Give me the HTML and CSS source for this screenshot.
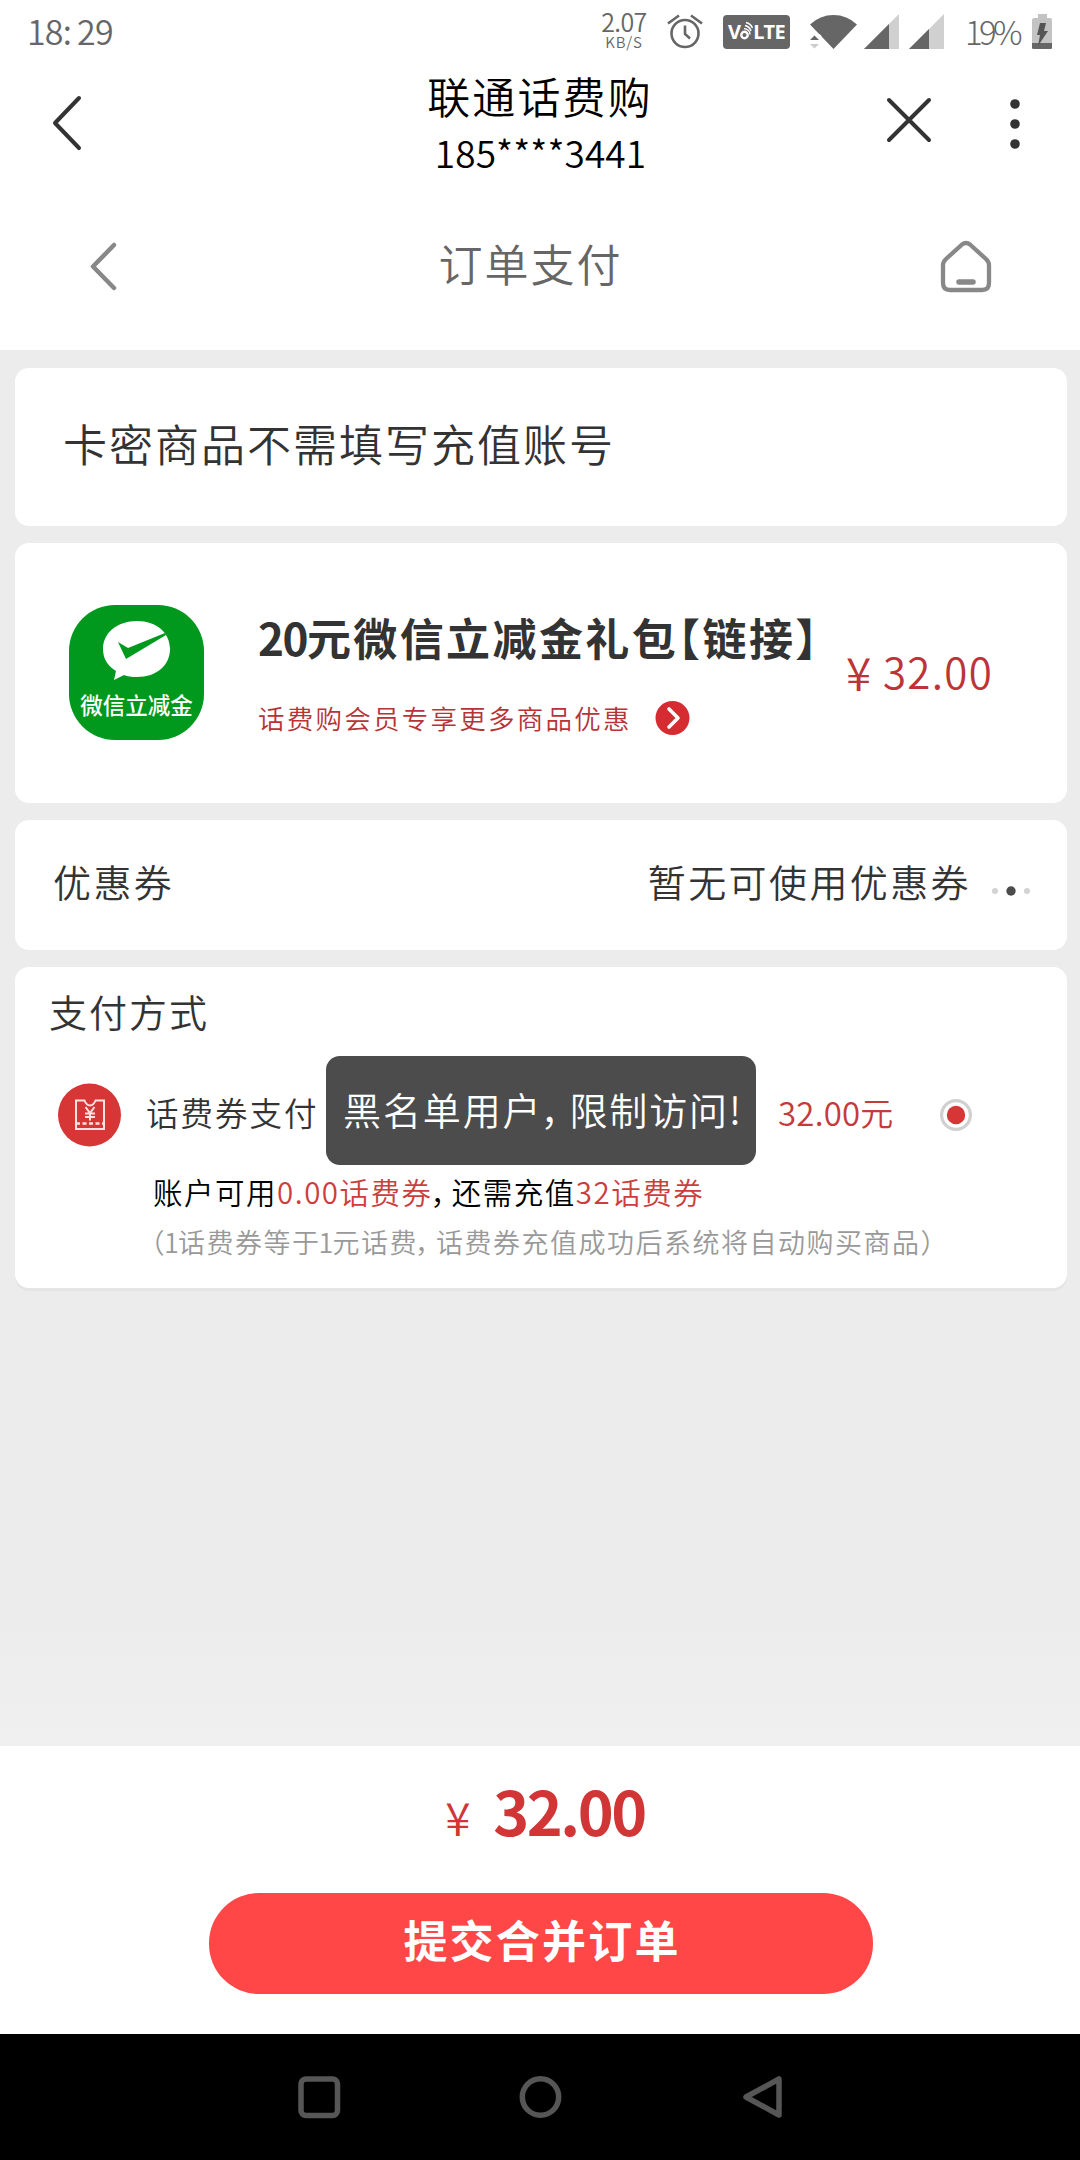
FILE: index.html
```html
<!DOCTYPE html>
<html lang="zh-CN">
<head>
<meta charset="utf-8">
<title>订单支付</title>
<link rel="stylesheet" href="styles.css">
</head>
<body>
<div class="screen">
  <header class="top">
    <div class="status">
      <span class="clock">18:<span class="minutes">29</span></span>
      <div class="speed"><span class="rate">2.07</span><span class="unit">KB/S</span></div>
      <svg class="alarm" width="36" height="36" viewBox="0 0 36 36" fill="none" stroke="#666" stroke-width="2.6">
        <circle cx="18" cy="19.5" r="13.5"/><path d="M18 11.5v8.5l5 4.5M1 9.500L12 1.500M35 9.500L24 1.500"/>
      </svg>
      <div class="volte">
        <span>V</span>
        <svg width="13" height="20" viewBox="0 0 13 20" fill="none" stroke="#fff"><circle cx="4.500" cy="14" r="3.200" stroke-width="2.400"/><path d="M4 7.500a6.500 6.500 0 0 1 6 6M5 4.500a8 8 0 0 1 6 5.500M6 1.500a9 9 0 0 1 6.500 5.500" stroke-width="1.500"/></svg>
        <span>LTE</span>
      </div>
      <svg class="wifi" width="47" height="36" viewBox="0 0 47 36" fill="#666">
        <path d="M0 10.500Q10 1 23.500 1T47 10.500L23.500 35Z"/><path d="M-1 20h10.500l2 2v14H-1z" fill="#fff"/><path d="M0 26l4.500-4.500L9 26z"/><path d="M0 30h9l-4.500 4.500z" fill="#ccc"/>
      </svg>
      <svg class="signal" width="35" height="36" viewBox="0 0 35 36"><path d="M0 35L35 0V35Z" fill="#d0d0d0"/><path d="M0 35L25 10V35Z" fill="#666"/></svg>
      <svg class="signal" width="35" height="36" viewBox="0 0 35 36"><path d="M0 35L35 0V35Z" fill="#d0d0d0"/><path d="M0 35L20 15V35Z" fill="#666"/></svg>
      <span class="percent">19%</span>
      <svg class="battery" width="20" height="36" viewBox="0 0 20 36"><path d="M6 0h9v4h3q2 0 2 2v28q0 1-2 1H2q-2 0-2-1V6q0-2 2-2h4z" fill="#c3c3c3"/><path d="M0 29h20v5q0 1-2 1H2q-2 0-2-1z" fill="#666"/><path d="M8 9h6l-2 8h4L6 32l2-11H5z" fill="#555"/></svg>
    </div>
    <div class="appbar">
      <svg width="30" height="56" viewBox="0 0 30 56" fill="none" stroke="#333" stroke-width="4" stroke-linecap="round" stroke-linejoin="round"><path d="M27 3L3 28L27 53"/></svg>
      <div class="account"><span class="name">联通话费购</span><span class="phone">185****3441</span></div>
      <div class="actions">
        <svg width="46" height="46" viewBox="0 0 46 46" stroke="#333" stroke-width="4" stroke-linecap="round"><path d="M3 3L43 43M43 3L3 43"/></svg>
        <svg width="12" height="52" viewBox="0 0 12 52" fill="#333"><circle cx="6" cy="6" r="4.800"/><circle cx="6" cy="26" r="4.800"/><circle cx="6" cy="46" r="4.800"/></svg>
      </div>
    </div>
    <div class="pagebar">
      <svg width="28" height="50" viewBox="0 0 28 50" fill="none" stroke="#888" stroke-width="4.500" stroke-linecap="round" stroke-linejoin="round"><path d="M25 3L4 24.500L25 46"/></svg>
      <h1>订单支付</h1>
      <svg width="52" height="54" viewBox="0 0 52 54" fill="none" stroke="#888" stroke-width="4.300" stroke-linecap="round" stroke-linejoin="round"><path d="M22 4.500Q26 1.500 30 4.500L46 19Q49 22 49 25V43Q49 50 42 50H10Q3 50 3 43V25Q3 22 6 19Z"/><path d="M19 42h14" stroke-width="5.500"/></svg>
    </div>
  </header>

  <main class="content">
    <section class="card notice">卡密商品不需填写充值账号</section>

    <section class="card product">
      <div class="logo">
        <svg width="76" height="64" viewBox="0 0 76 64"><path d="M38 2C58 2 71 14 71 30S58 58 38 58Q30 58 25 56L15 61L17 52Q4 44 4 30C4 14 18 2 38 2Z" fill="#fff"/><path d="M19 23L29 29L66 14L67 16L27 40Z" fill="#00991d"/></svg>
        <span>微信立减金</span>
      </div>
      <div class="info">
        <h2><span class="digits">20</span>元微信立减金礼包【链接】</h2>
        <div class="member">
          <span>话费购会员专享更多商品优惠</span>
          <svg width="35" height="36" viewBox="0 0 35 36"><circle cx="17.500" cy="18" r="17" fill="#d42c31"/><path d="M14 9L23 18L14 27" fill="none" stroke="#fff" stroke-width="3.600" stroke-linecap="round" stroke-linejoin="round"/></svg>
        </div>
      </div>
      <div class="price"><span class="yen">¥</span><span>32.00</span></div>
    </section>

    <section class="card coupon">
      <span>优惠券</span>
      <div class="none"><span>暂无可使用优惠券</span>
        <svg width="40" height="12" viewBox="0 0 40 12"><circle cx="4" cy="6" r="3" fill="#d3d3d3"/><circle cx="20" cy="6" r="4.700" fill="#4c4c4c"/><circle cx="36" cy="6" r="3" fill="#d3d3d3"/></svg>
      </div>
    </section>

    <section class="card payment">
      <h3>支付方式</h3>
      <div class="method">
        <svg width="64" height="64" viewBox="0 0 64 64"><circle cx="31.500" cy="32" r="31.500" fill="#d63636"/><g fill="none" stroke="#ffe1df" stroke-width="2"><path d="M18 17.500h8.500q2 5 5.500 5t5.500-5H46V46H18Z"/><path d="M18 40.500h28" stroke-dasharray="4 2.500" stroke-width="2.600"/><path d="M27.500 24L32 30L36.500 24M27 30.500h10M27 34h10M32 30v7.500"/></g></svg>
        <span class="label">话费券支付</span>
        <span class="amount">32.00元</span>
        <svg class="radio" width="34" height="34" viewBox="0 0 34 34"><circle cx="17" cy="17" r="14.400" fill="#fff" stroke="#d0d0d0" stroke-width="3.200"/><circle cx="17" cy="17" r="9.200" fill="#d63636"/></svg>
      </div>
      <p class="balance">账户可用<em>0.00话费券</em><i class="comma">，</i>还需充值<em>32话费券</em></p>
      <p class="hint"><i class="paren">（</i><i class="one">1</i>话费券等于<i class="one">1</i>元话费<i class="comma">，</i>话费券充值成功后系统将自动购买商品<i class="paren">）</i></p>
      <div class="toast" role="alert">黑名单用户<i class="comma">，</i>限制访问!</div>
    </section>
  </main>

  <footer class="checkout">
    <div class="total"><span class="yen">¥</span><strong>32.00</strong></div>
    <button class="submit" type="button">提交合并订单</button>
  </footer>

  <nav class="system">
    <svg width="44" height="44" viewBox="0 0 44 44" fill="none" stroke="#565656" stroke-width="5.500"><rect x="4" y="4" width="36.500" height="36.500" rx="5"/></svg>
    <svg width="44" height="44" viewBox="0 0 44 44" fill="none" stroke="#565656" stroke-width="5.500"><circle cx="21.500" cy="22" r="18.200"/></svg>
    <svg width="44" height="44" viewBox="0 0 44 44" fill="none" stroke="#565656" stroke-width="5.500" stroke-linejoin="round"><path d="M38 4V40L5 22Z"/></svg>
  </nav>
</div>
</body>
</html>
```
FILE: styles.css
```css
* { box-sizing: border-box; }
html, body { margin: 0; padding: 0; }
body {
  width: 1080px;
  font-family: "Noto Sans CJK SC", sans-serif;
  font-weight: 350;
  color: #333;
}
svg { display: block; flex: none; }
h1, h2, h3, p { margin: 0; font-weight: inherit; }
em, i { font-style: normal; }
.screen { display: flex; flex-direction: column; width: 1080px; height: 2160px; overflow: hidden; background: #ececec; white-space: nowrap; }

.top { height: 350px; background: #fff; }
.status { display: flex; height: 64px; padding: 0 28px 0 27px; align-items: center; color: #666; }
.clock { margin-right: auto; margin-top: -2px; font-size: 34px; line-height: 60px; letter-spacing: -.8px; }
.minutes { margin-left: 6px; }
.speed { display: flex; flex-direction: column; align-items: center; width: 50px; margin-right: 18px; height: 48px; }
.rate { font-size: 25px; line-height: 26px; letter-spacing: -.6px; }
.unit { font-size: 15px; line-height: 15px; letter-spacing: .8px; }
.alarm { margin-right: 20px; }
.volte { display: flex; align-items: center; justify-content: center; width: 67px; height: 34px; margin-right: 20px; border-radius: 4px; background: #666; color: #fff; font: 700 20px/34px "Noto Sans", sans-serif; letter-spacing: -.6px; }
.volte svg { margin: -3px 0 0 0; }
.wifi { margin-right: 7px; }
.signal { margin-right: 10px; }
.percent { margin-left: 11px; margin-top: -2px; width: 56px; font-size: 33px; line-height: 60px; font-weight: 300; letter-spacing: -3.600px; }
.battery { margin-left: 11px; }

.appbar { display: grid; grid-template-columns: 300px 1fr 300px; height: 121px; padding: 0 59px 0 52px; }
.appbar > svg { margin-top: 31px; }
.account { display: flex; flex-direction: column; align-items: center; color: #000; }
.name { font-size: 43px; line-height: 62px; letter-spacing: 2.100px; margin-left: 7px; }
.phone { font-size: 37px; line-height: 52px; letter-spacing: .1px; margin-left: 8px; }
.actions { display: flex; justify-content: flex-end; gap: 77px; padding-top: 33px; }
.actions svg:last-child { margin-top: 1px; }

.pagebar { display: flex; justify-content: space-between; padding: 57px 88px 0 89px; }
.pagebar h1 { font-size: 44px; line-height: 60px; letter-spacing: 2px; margin: -9px 0 0 4px; color: #666; }
.pagebar > svg:last-child { margin-top: -2px; }

.content { flex: 1; display: flex; flex-direction: column; gap: 17px; padding: 18px 13px 0 15px; background: linear-gradient(#ececec 0, #ececec 1270px, #f0f0f0 1396px); }
.card { background: #fff; border-radius: 14px; flex: none; }
.notice { height: 158px; padding-left: 48px; font-size: 44px; line-height: 150px; letter-spacing: 2px; }

.product { display: flex; height: 260px; padding-left: 54px; }
.logo { display: flex; flex-direction: column; align-items: center; width: 135px; height: 135px; margin-top: 62px; border-radius: 46px; background: #00991d; color: #fff; }
.logo svg { margin-top: 14px; }
.logo span { font-size: 22.500px; font-weight: 500; line-height: 28px; margin-top: 7px; }
.info { width: 556px; margin-left: 54px; padding-top: 61px; }
.info h2 { font-size: 44px; line-height: 66px; font-weight: 700; letter-spacing: 2.400px; font-feature-settings: "halt"; }
.digits { letter-spacing: -1.500px; }
.member { display: flex; align-items: center; gap: 23px; margin-top: 30px; color: #b73337; font-size: 26.500px; line-height: 36px; letter-spacing: 2.250px; }
.price { display: flex; margin-left: 32px; padding-top: 95px; color: #bd3338; font-size: 42px; line-height: 66px; letter-spacing: 1.300px; }
.price .yen { width: 37px; font-size: 46px; }

.coupon { display: flex; justify-content: space-between; height: 130px; padding: 0 36px 0 38px; font-size: 38px; line-height: 122px; letter-spacing: 2.400px; }
.none { display: flex; gap: 20px; }
.none svg { margin-top: 65px; }

.payment { position: relative; height: 321px; padding: 16px 0 0 34px; box-shadow: 0 3px 0 #e4e4e4; }
.payment h3 { font-size: 38px; line-height: 56px; letter-spacing: 2px; }
.method { display: flex; align-items: center; height: 64px; margin: 44px 0 0 9px; }
.label { font-size: 32.500px; line-height: 60px; letter-spacing: 2px; margin-left: 24px; width: 632px; }
.amount { width: 161px; font-size: 33px; line-height: 60px; letter-spacing: .2px; color: #c53a3b; }
.label, .amount { margin-top: -6px; }
.balance { margin: 24px 0 0 104px; font-size: 29.500px; line-height: 40px; letter-spacing: 1.500px; color: #000; }
.balance em { color: #cc3e3e; }
.comma, .paren { font-feature-settings: "halt"; }
.balance .comma { margin: 0 5px 0 -2px; }
.hint { margin: 11px 0 0 102px; font-size: 27px; line-height: 40px; letter-spacing: 1.500px; color: #999; }
.hint .one { margin-left: -2px; letter-spacing: -.8px; }
.hint .comma { margin: 0 6px 0 -3px; }
.toast { position: absolute; left: 311px; top: 89px; width: 430px; height: 109px; padding-left: 17px; border-radius: 14px; background: #4c4c4c; color: #fff; font-size: 38px; line-height: 105px; letter-spacing: 1.900px; }
.toast .comma { margin: 0 8px 0 -2px; }

.checkout { display: flex; flex-direction: column; align-items: center; height: 288px; background: #fff; }
.total { display: flex; align-items: baseline; height: 147px; padding-top: 19px; color: #d13535; line-height: 90px; margin-left: 10px; }
.total .yen { width: 48px; font-size: 46px; }
.total strong { font-size: 61px; font-weight: 700; letter-spacing: -2.500px; }
.submit { width: 664px; height: 101px; padding: 0 0 9px 2px; border: 0; border-radius: 50px; background: #ff4747; color: #fff; font: 700 44px/92px "Noto Sans CJK SC", sans-serif; letter-spacing: 2.200px; margin-left: 2px; }

.system { display: flex; justify-content: center; gap: 178px; height: 126px; padding: 41px 0 0 1px; background: #000; }
```
